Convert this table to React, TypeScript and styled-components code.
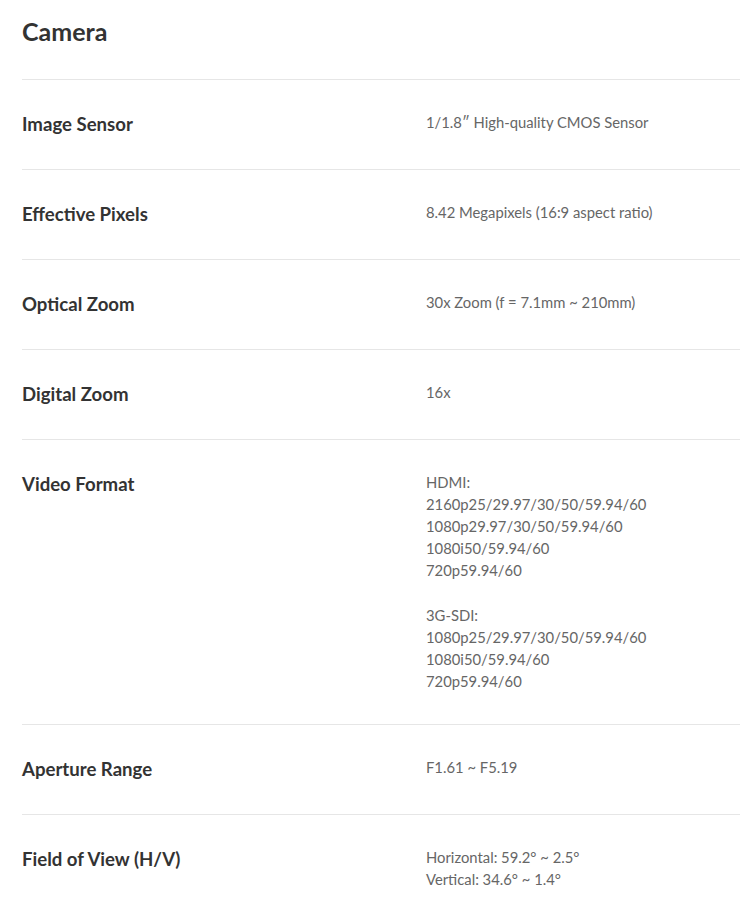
import styled, { createGlobalStyle } from "styled-components";

const GlobalStyle = createGlobalStyle`
  html, body { margin: 0; padding: 0; background: #fff; }
  body { font-family: Lato, "Noto Sans", sans-serif; -webkit-font-smoothing: antialiased; }
`;

const Section = styled.section`
  padding-left: 22px;
`;

const Title = styled.h2`
  margin: 0;
  padding: 17px 0 34px;
  font-size: 25px;
  line-height: 28px;
  font-weight: 700;
  color: #333;
`;

const Row = styled.div`
  display: grid;
  grid-template-columns: 404px 1fr;
  align-items: start;
  padding: 31px 0 32px;
  border-top: 1px solid #e6e6e6;
`;

const Label = styled.div`
  font-size: 18.6px;
  line-height: 26px;
  font-weight: 700;
  color: #333;
`;

const Value = styled.div`
  font-size: 14.8px;
  line-height: 22.1px;
  color: #666;
  white-space: pre-line;
`;

const specs: { label: string; value: string }[] = [
  { label: "Image Sensor", value: "1/1.8\u2033 High-quality CMOS Sensor" },
  { label: "Effective Pixels", value: "8.42 Megapixels (16:9 aspect ratio)" },
  { label: "Optical Zoom", value: "30x Zoom (f = 7.1mm ~ 210mm)" },
  { label: "Digital Zoom", value: "16x" },
  {
    label: "Video Format",
    value:
      "HDMI:\n2160p25/29.97/30/50/59.94/60\n1080p29.97/30/50/59.94/60\n1080i50/59.94/60\n720p59.94/60\n\n3G-SDI:\n1080p25/29.97/30/50/59.94/60\n1080i50/59.94/60\n720p59.94/60",
  },
  { label: "Aperture Range", value: "F1.61 ~ F5.19" },
  { label: "Field of View (H/V)", value: "Horizontal: 59.2\u00b0 ~ 2.5\u00b0\nVertical: 34.6\u00b0 ~ 1.4\u00b0" },
];

const App = () => (
  <>
    <GlobalStyle />
    <Section>
      <Title>Camera</Title>
      {specs.map((s) => (
        <Row key={s.label}>
          <Label>{s.label}</Label>
          <Value>{s.value}</Value>
        </Row>
      ))}
    </Section>
  </>
);

export default App;
